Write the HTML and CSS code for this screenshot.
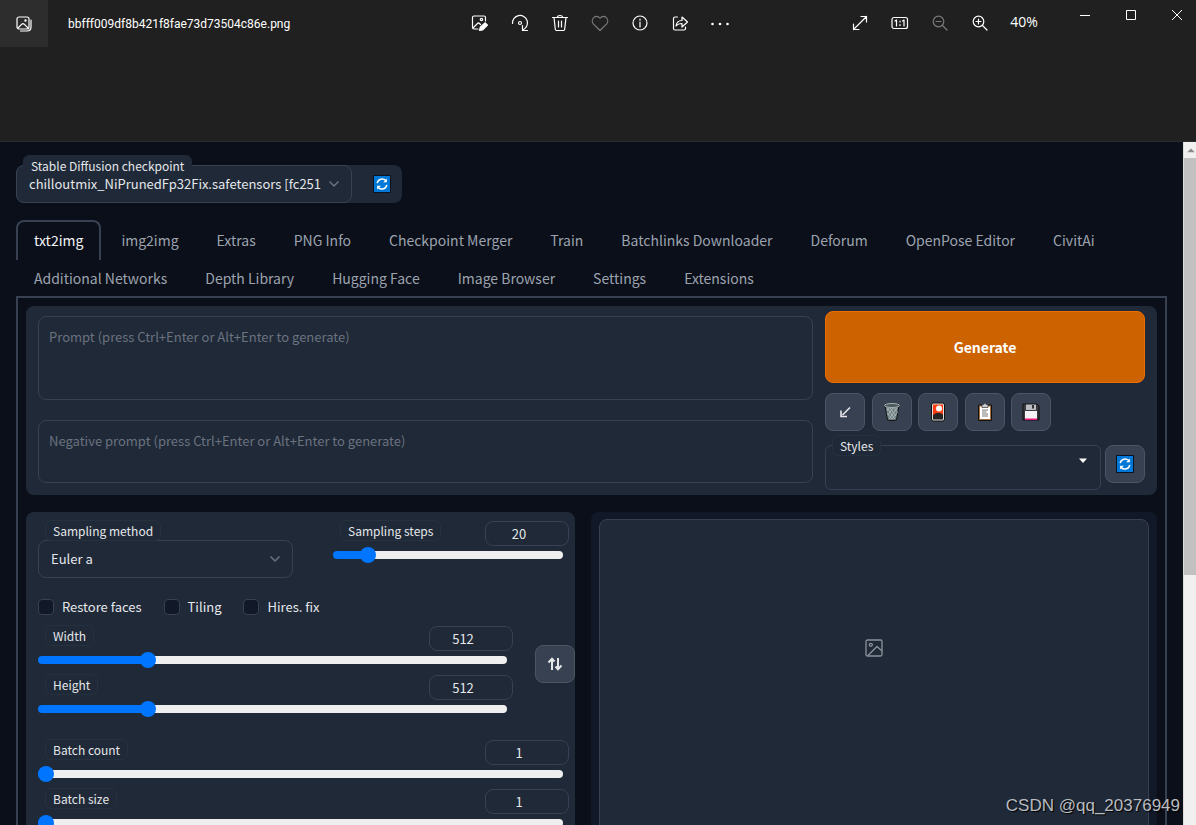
FILE: index.html
```html
<!DOCTYPE html>
<html lang="en">
<head>
<meta charset="utf-8">
<title>bbfff009df8b421f8fae73d73504c86e.png</title>
<link rel="stylesheet" href="styles.css">
</head>
<body>
<svg class="defs" aria-hidden="true">
  <symbol id="refresh" viewBox="0 0 18 18">
    <rect width="18" height="18" rx="1" fill="#0b1220"/><rect x="1" y="1" width="16" height="16" fill="#0078d7"/>
    <path d="M4.2 8.2a5 5 0 0 1 8.6-2.6M13.8 9.8a5 5 0 0 1-8.6 2.6" fill="none" stroke="#fff" stroke-width="1.5"/>
    <path d="M13.9 3.4v3.8h-3.8zM4.1 14.6v-3.8h3.8z" fill="#fff"/>
  </symbol>
  <symbol id="chevron" viewBox="0 0 12 8"><path d="M1.500 1.500 6 6l4.500-4.500" fill="none" stroke="#6b7280" stroke-width="1.500"/></symbol>
</svg>

<header class="viewer">
  <div class="titlebar">
    <div class="title-left">
      <button class="gallery" aria-label="Gallery"><svg width="16" height="16" viewBox="0 0 16 16" class="line"><rect x="1" y="1" width="12" height="12" rx="2"/><path d="M2 12l3.800-3.800q1.200-1 2.400 0L12 12M4.500 15H11q4 0 4-4V4"/><circle cx="9.500" cy="4.500" r=".6"/></svg></button>
      <span class="filename">bbfff009df8b421f8fae73d73504c86e.png</span>
    </div>
    <nav class="tools" aria-label="Image tools">
      <button aria-label="Edit"><svg width="18" height="18" viewBox="0 0 18 18" class="line"><path d="M7 15H3q-1.500 0-1.500-1.500v-10Q1.500 2 3 2h10q1.500 0 1.500 1.500V7M2 14l4.500-4.500q1-1 2 0l1 1"/><circle cx="10.500" cy="5.500" r="1.200"/><path d="M8.500 16.500l.8-3.200 4.900-4.500 2.300 2.300-4.700 4.700z" fill="#fff"/></svg></button>
      <button aria-label="Rotate"><svg width="18" height="18" viewBox="0 0 18 18" class="line"><path d="M1.500 9.500a7.500 7.500 0 1 1 10.800 6.200M11.500 11.500v5h5"/><circle cx="9" cy="9" r="1.500"/></svg></button>
      <button aria-label="Delete"><svg width="18" height="18" viewBox="0 0 18 18" class="line"><path d="M1.500 3.500h15M6.500 3.500q0-2 2.500-2t2.500 2M3 3.500l1.300 11.800q.1 1.200 1.200 1.200h7q1.100 0 1.200-1.200L15 3.500M7.500 7v6M10.500 7v6"/></svg></button>
      <button class="dim" aria-label="Favourite"><svg width="18" height="18" viewBox="0 0 18 18" class="line"><path d="M9 16.500L2.300 9.800C-1 6 4.500-.8 9 4.200c4.500-5 10 1.800 6.700 5.600z"/></svg></button>
      <button aria-label="Info"><svg width="18" height="18" viewBox="0 0 18 18" class="line"><circle cx="9" cy="9" r="7"/><path d="M9 8v5M9 5v1.200"/></svg></button>
      <button aria-label="Share"><svg width="18" height="18" viewBox="0 0 18 18" class="line"><path d="M6.500 3H4Q2.500 3 2.500 4.500v10Q2.500 16 4 16h9q1.500 0 1.500-1.500V13M5 12c.5-4 3-5.500 6-5.500V3l5.500 5-5.500 5V9.500c-2.500 0-4.500.5-6 2.500z"/></svg></button>
      <button aria-label="More"><svg width="20" height="18" viewBox="0 0 20 18" fill="#fff"><circle cx="2.500" cy="10" r="1.300"/><circle cx="10" cy="10" r="1.300"/><circle cx="17.500" cy="10" r="1.300"/></svg></button>
    </nav>
    <div class="title-right">
      <div class="zoom">
        <button aria-label="Full screen"><svg width="16" height="16" viewBox="0 0 16 16" class="line"><path d="M1.500 14.500l13-13M9 1.500h5.500V7M1.500 9v5.500H7"/></svg></button>
        <button aria-label="Actual size"><svg width="18" height="14" viewBox="0 0 18 14" class="line"><rect x="1" y="1.500" width="15.500" height="11" rx="2"/><path d="M4 5l1.500-1v6M11.500 5L13 4v6M9 5v1M9 8.500v1"/></svg></button>
        <button class="dim" aria-label="Zoom out"><svg width="16" height="16" viewBox="0 0 16 16" class="line"><circle cx="6.500" cy="6.500" r="5.300"/><path d="M10.500 10.500L15 15M4 6.500h5"/></svg></button>
        <button aria-label="Zoom in"><svg width="16" height="16" viewBox="0 0 16 16" class="line"><circle cx="6.500" cy="6.500" r="5.300"/><path d="M10.500 10.500L15 15M4 6.500h5M6.500 4v5"/></svg></button>
        <span class="percent">40%</span>
      </div>
      <div class="window">
        <button aria-label="Minimize"><svg width="12" height="12" viewBox="0 0 12 12" class="crisp"><path d="M1 6.500h10"/></svg></button>
        <button aria-label="Maximize"><svg width="12" height="12" viewBox="0 0 12 12" class="crisp"><path d="M1.500 1.500h9v9h-9z"/></svg></button>
        <button aria-label="Close"><svg width="12" height="12" viewBox="0 0 12 12" class="crisp"><path d="M1 1l10 10M11 1L1 11"/></svg></button>
      </div>
    </div>
  </div>
</header>

<div class="stage">
<main class="app">
  <div class="checkpoint">
    <label class="badge" for="ckpt">Stable Diffusion checkpoint</label>
    <div class="select-wrap">
      <select id="ckpt"><option>chilloutmix_NiPrunedFp32Fix.safetensors [fc251</option></select>
      <svg class="chev" width="12" height="8"><use href="#chevron"/></svg>
    </div>
    <button class="plain-refresh" aria-label="Refresh checkpoints"><svg width="18" height="18"><use href="#refresh"/></svg></button>
  </div>

  <nav class="tabs" aria-label="Sections">
    <button class="active">txt2img</button><button>img2img</button><button>Extras</button><button>PNG Info</button><button>Checkpoint Merger</button><button>Train</button><button>Batchlinks Downloader</button><button>Deforum</button><button>OpenPose Editor</button><button>CivitAi</button><button>Additional Networks</button><button>Depth Library</button><button>Hugging Face</button><button>Image Browser</button><button>Settings</button><button>Extensions</button>
  </nav>

  <div class="tab-body">
    <section class="prompt-panel">
      <div class="prompts">
        <textarea class="prompt" aria-label="Prompt" placeholder="Prompt (press Ctrl+Enter or Alt+Enter to generate)"></textarea>
        <textarea class="negative" aria-label="Negative prompt" placeholder="Negative prompt (press Ctrl+Enter or Alt+Enter to generate)"></textarea>
      </div>
      <div class="actions">
        <button class="generate">Generate</button>
        <div class="quick">
          <button class="tool" aria-label="Read parameters"><svg width="18" height="18" viewBox="0 0 18 18"><path d="M14 4.500L6.500 12M5 7.500v6h6" fill="none" stroke="#e5e7eb" stroke-width="1.600"/></svg></button>
          <button class="tool" aria-label="Clear prompt"><svg width="18" height="20" viewBox="0 0 18 20"><path d="M2 3.500L4.500 18q4.500 1.500 9 0L16 3.500z" fill="#6f7f82" stroke="#111" stroke-width="1"/><path d="M4 6l8 11M7 6l6 8M11 6l4 5M14 6L6 17M10 6l-5 7M6 6l-2 3M4 11l5 6M9 17l5-6" stroke="#bac6c5" stroke-width=".7"/><ellipse cx="9" cy="3.500" rx="7.500" ry="2" fill="#4c5b60" stroke="#a4b0b0"/></svg></button>
          <button class="tool" aria-label="Show extra networks"><svg width="16" height="20" viewBox="0 0 16 20"><rect x="1.500" y="1" width="13" height="18" rx="2" fill="#ddd" stroke="#111"/><path d="M3 2.500h10V13H3z" fill="#fc3c12"/><path d="M3 13q5-4 10-.5v5H3z" fill="#252525"/><circle cx="9" cy="6.500" r="3" fill="#fff"/></svg></button>
          <button class="tool" aria-label="Apply style"><svg width="16" height="20" viewBox="0 0 16 20"><path d="M1.500 3h13v15.500h-13z" fill="#a56c3c" stroke="#111"/><path d="M3 4.500h10v12.500H3z" fill="#fff"/><path d="M5 2.500h1.500Q8 0 9.500 2.500H11v3H5z" fill="#c8ccd0" stroke="#333" stroke-width=".7"/><path d="M5 8h6M5 10h4.500M5 12h6M5 14h6" stroke="#777"/></svg></button>
          <button class="tool" aria-label="Save style"><svg width="18" height="18" viewBox="0 0 18 18"><path d="M1 1h14l2 2v14H1z" fill="#3b3b3f" stroke="#111"/><path d="M4 1.500h10v5.500H4z" fill="#b9bdc1"/><path d="M10 2h2v3.500h-2z" fill="#333"/><path d="M3 8h12v9H3z" fill="#f5f2f5"/><path d="M3 15.500h12V17H3z" fill="#f0147a"/></svg></button>
        </div>
        <div class="styles-row">
          <div class="styles-box">
            <label class="badge" for="styles">Styles</label>
            <select id="styles"><option></option></select>
            <svg class="caret" width="10" height="6" viewBox="0 0 10 6"><path d="M1 .5h8L5 5z" fill="#fff"/></svg>
          </div>
          <button class="tool" aria-label="Refresh styles"><svg width="18" height="18"><use href="#refresh"/></svg></button>
        </div>
      </div>
    </section>

    <div class="columns">
      <section class="settings">
        <div class="sampling">
          <div class="method">
            <label class="badge" for="method">Sampling method</label>
            <div class="select-wrap">
              <select id="method"><option>Euler a</option></select>
              <svg class="chev" width="12" height="8"><use href="#chevron"/></svg>
            </div>
          </div>
          <div class="field"><label class="badge" for="steps">Sampling steps</label><input class="num" type="number" value="20" aria-label="Sampling steps value"><input id="steps" type="range" min="1" max="150" value="20" style="--fill:15%"></div>
        </div>
        <div class="checks">
          <label><input type="checkbox">Restore faces</label>
          <label><input type="checkbox">Tiling</label>
          <label><input type="checkbox">Hires. fix</label>
        </div>
        <div class="size">
          <div class="stack">
            <div class="field"><label class="badge" for="width">Width</label><input class="num" type="number" value="512" aria-label="Width value"><input id="width" type="range" min="64" max="2048" value="512" style="--fill:23%"></div>
            <div class="field"><label class="badge" for="height">Height</label><input class="num" type="number" value="512" aria-label="Height value"><input id="height" type="range" min="64" max="2048" value="512" style="--fill:23%"></div>
          </div>
          <button class="tool swap" aria-label="Swap width and height"><svg width="16" height="16" viewBox="0 0 16 16"><path d="M5 14V3M1.500 6.500L5 2.800l2.500 2.700M11 2v11M8.500 10.500l2.500 2.700 3.500-3.700" fill="none" stroke="#e5e7eb" stroke-width="2"/></svg></button>
        </div>
        <div class="stack batch">
          <div class="field"><label class="badge" for="count">Batch count</label><input class="num" type="number" value="1" aria-label="Batch count value"><input id="count" type="range" min="1" max="100" value="1" style="--fill:2%"></div>
          <div class="field"><label class="badge" for="bsize">Batch size</label><input class="num" type="number" value="1" aria-label="Batch size value"><input id="bsize" type="range" min="1" max="8" value="1" style="--fill:2%"></div>
        </div>
      </section>
      <section class="output">
        <div class="gallery-box"><svg width="18" height="18" viewBox="0 0 18 18" fill="none" stroke="#8b929c" stroke-width="1.300"><rect x="1" y="1" width="16" height="16" rx="1.500"/><circle cx="5.800" cy="5.800" r="1.500"/><path d="M3 16.500L12 7.500l5 4.500"/></svg></div>
      </section>
    </div>
  </div>
</main>
<div class="scrollbar" aria-hidden="true"><svg width="13" height="17" viewBox="0 0 13 17"><path d="M3 11l4-4 4 4z" fill="#8b8b8b"/></svg><div class="thumb"></div></div>
</div>
<div class="watermark">CSDN @qq_20376949</div>
</body>
</html>
```
FILE: styles.css
```css
* { box-sizing: border-box; }
body {
  margin: 0;
  height: 100vh;
  display: flex;
  flex-direction: column;
  overflow: hidden;
  position: relative;
  background: #0b0f19;
  color: #e5e7eb;
  font: 13px/20px "Noto Sans CJK SC", "Noto Sans", sans-serif;
}
button, input, select, textarea { font: inherit; color: inherit; margin: 0; }
button { padding: 0; border: 0; background: none; display: flex; align-items: center; justify-content: center; }
svg { display: block; flex: none; }
.defs { position: absolute; width: 0; height: 0; }

/* viewer title bar */
.viewer { flex: none; height: 142px; background: #202020; border-bottom: 1px solid #2c2d30; }
.titlebar { display: grid; grid-template-columns: 1fr auto 1fr; height: 47px; }
.line { fill: none; stroke: #fff; stroke-width: 1.2; stroke-linejoin: round; stroke-linecap: round; }
.crisp { fill: none; stroke: #fff; }
.dim { opacity: .4; }
.title-left { display: flex; align-items: center; gap: 20px; }
.gallery { width: 48px; height: 47px; background: #2d2d2d; }
.filename { font: 12px/20px Roboto, sans-serif; color: #fff; white-space: nowrap; }
.tools { display: flex; margin-left: 4px; }
.tools button, .zoom button { width: 40px; height: 46px; }
.title-right { display: flex; justify-content: flex-end; gap: 22px; }
.zoom { display: flex; align-items: center; height: 46px; }
.percent { width: 44px; text-align: center; font: 14px/20px "Open Sans", sans-serif; color: #fff; padding: 0 0 2px 4px; }
.window { display: flex; gap: 8px; }
.window button { width: 38px; height: 30px; }

/* page */
.stage { flex: 1; min-height: 0; display: flex; overflow: hidden; }
.app { flex: 1; min-width: 0; padding: 13px 16px 0; display: flex; flex-direction: column; }
.scrollbar { width: 13px; background: #f0f0f0; border-left: 1px solid #dcdcdc; }
.thumb { height: 61%; background: #c1c1c1; }
.scrollbar svg { height: 16px; }

.badge {
  position: relative;
  z-index: 1;
  justify-self: start;
  height: 21px;
  margin-left: 7px;
  padding: 0 7px;
  border: 1px solid #263140;
  border-radius: 6px;
  background: #1f2937;
  font-size: 12px;
  white-space: nowrap;
}
.select-wrap { display: grid; align-items: center; }
.select-wrap > * { grid-area: 1 / 1; }
.chev { justify-self: end; margin-right: 12px; pointer-events: none; }
select {
  appearance: none;
  width: 100%;
  height: 38px;
  padding: 0 30px 0 12px;
  border: 1px solid #374151;
  border-radius: 8px;
  background: #1f2937;
}

.checkpoint {
  display: grid;
  grid-template-columns: 336px 50px;
  grid-template-rows: 10px 38px;
  justify-content: start;
}
.checkpoint .badge { grid-area: 1 / 1; border-color: #1f2937; }
.checkpoint .select-wrap { grid-area: 2 / 1; background: #1f2937; border-radius: 8px 0 0 8px; }
.checkpoint .plain-refresh { grid-area: 2 / 2; background: #1f2937; border-radius: 0 8px 8px 0; padding-left: 10px; }

.tabs { display: flex; flex-wrap: wrap; column-gap: 2px; margin-top: 17px; }
.tabs button {
  height: 38px;
  padding: 0 16px;
  border: 2px solid transparent;
  border-bottom: 0;
  border-radius: 8px 8px 0 0;
  font-size: 14px;
  color: #9ca3af;
}
.tabs .active { height: 40px; margin-bottom: -2px; padding-bottom: 2px; border-color: #374151; color: #f3f4f6; }

.tab-body { flex: 1; border: 2px solid #374151; border-bottom: 0; padding: 8px; min-height: 0; overflow: hidden; }
.prompt-panel {
  display: grid;
  grid-template-columns: 1fr 320px;
  gap: 12px;
  padding: 5px 12px;
  border-radius: 8px;
  background: #1f2937;
}
.prompts { display: flex; flex-direction: column; gap: 20px; padding: 5px 0 7px; }
textarea {
  display: block;
  width: 100%;
  padding: 10px;
  border: 1px solid #374151;
  border-radius: 8px;
  background: #1f2937;
  resize: none;
}
textarea::placeholder { color: #6b7280; }
.prompt { height: 84px; }
.negative { height: 63px; }
.generate {
  width: 100%;
  height: 72px;
  border: 1px solid #ea6f00;
  border-radius: 8px;
  background: #cc6200;
  color: #fff;
  font-size: 14px;
  font-weight: 600;
}
.quick { display: flex; justify-content: space-between; width: 226px; margin: 10px 0 14px; }
.tool { width: 40px; height: 38px; border: 1px solid #4b5563; border-radius: 8px; background: #374151; }
.styles-row { display: flex; gap: 4px; }
.styles-box { flex: 1; position: relative; height: 45px; }
.styles-box select { height: 45px; border-radius: 6px; }
.styles-box .badge { position: absolute; top: -10px; left: 0; }
.caret { position: absolute; right: 13px; top: 13px; pointer-events: none; }

.columns { display: grid; grid-template-columns: 549fr 566fr; gap: 16px; margin-top: 17px; }
.settings { padding: 8px 0 8px 12px; border-radius: 8px; background: #1f2937; }
.sampling { display: grid; grid-template-columns: 255fr 236fr; gap: 40px; padding-right: 6px; }
.method { display: grid; grid-template-rows: 20px 38px; }
.field { display: grid; grid-template-columns: 1fr 84px; grid-template-rows: 27px 16px; }
.num {
  height: 25px;
  margin-top: 1px;
  padding: 0 16px 0 0;
  border: 1px solid #374151;
  border-radius: 8px;
  background: #1f2937;
  text-align: center;
  width: 100%;
  appearance: textfield;
}
.num::-webkit-inner-spin-button { appearance: none; display: none; }
input[type="range"] {
  grid-column: 1 / -1;
  appearance: none;
  height: 16px;
  margin-right: 6px;
  background: none;
}
input[type="range"]::-webkit-slider-runnable-track {
  height: 8px;
  border-radius: 4px;
  background: linear-gradient(to right, #0075ff var(--fill), #efefef var(--fill));
}
input[type="range"]::-webkit-slider-thumb {
  appearance: none;
  width: 16px;
  height: 16px;
  margin-top: -4px;
  border-radius: 50%;
  background: #0075ff;
}
.checks { display: flex; gap: 22px; height: 20px; margin: 19px 0 8px; }
.checks label { display: flex; align-items: center; gap: 8px; }
.checks input { appearance: none; width: 16px; height: 16px; border: 1px solid #374151; border-radius: 4px; background: #111827; }
.size { display: grid; grid-template-columns: 1fr 40px; gap: 22px; }
.swap { margin-top: 20px; }
.stack { display: flex; flex-direction: column; gap: 6px; }
.batch { margin-top: 22px; padding-right: 6px; }

.output { padding: 7px 8px; border-radius: 8px; background: #111827; }
.gallery-box {
  height: 100%;
  min-height: 300px;
  display: flex;
  justify-content: center;
  padding-top: 119px;
  border: 1px solid #374151;
  border-radius: 8px;
  background: #1f2937;
}
.watermark {
  position: absolute;
  right: 16px;
  bottom: 8px;
  font: 17px/22px "Liberation Sans", Arial, sans-serif;
  color: #b9bcc0;
  text-shadow: 1px 1px 1px #000;
}
```
